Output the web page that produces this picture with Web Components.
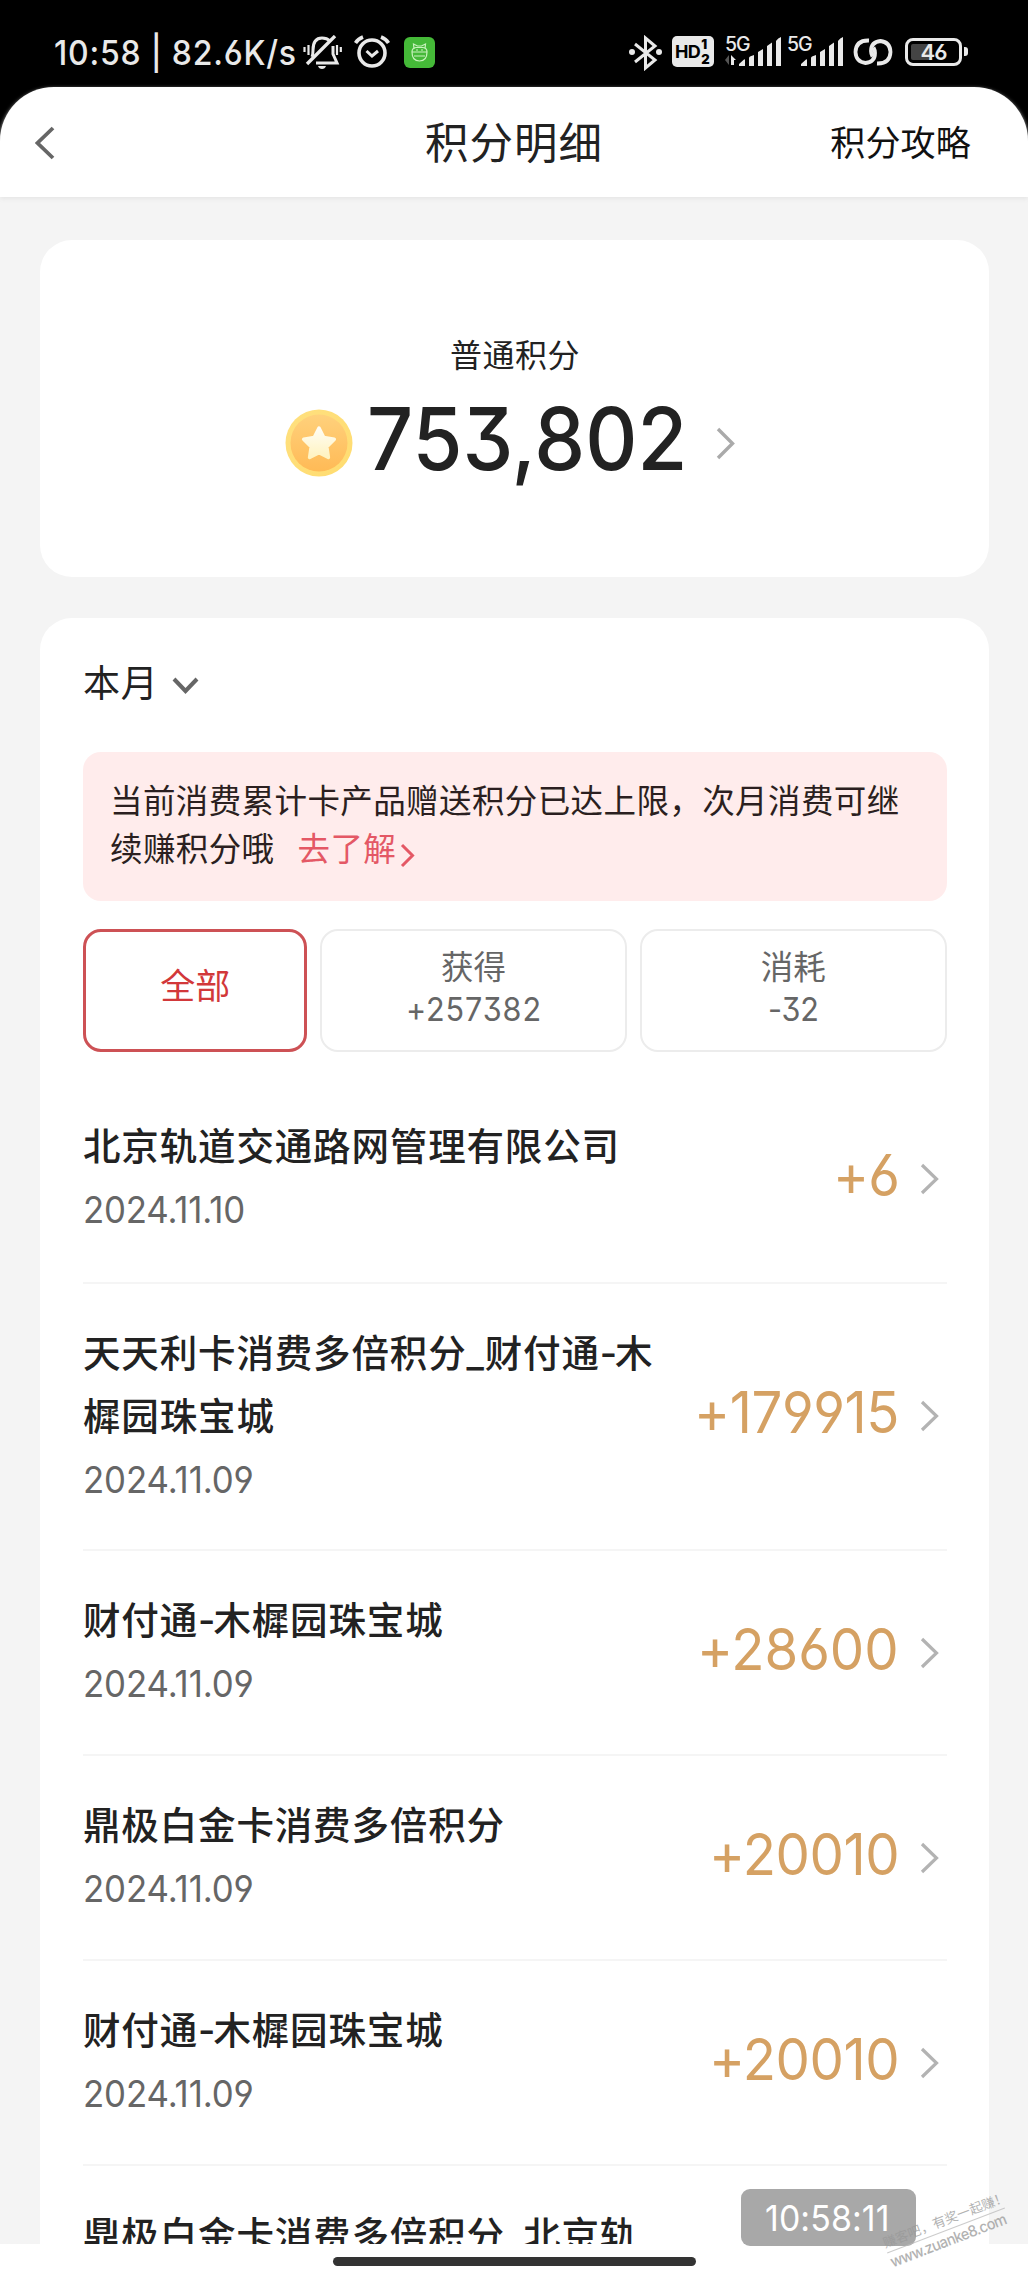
<!DOCTYPE html>
<html lang="zh-CN">
<head>
<meta charset="utf-8">
<title>积分明细</title>
<style>
  html, body { margin: 0; }
  body {
    width: 1028px; height: 2284px; overflow: hidden; background: #000;
    font-family: "Inter", "Noto Sans CJK SC", sans-serif; color: #222;
    font-feature-settings: "cv03", "cv04", "cv09"; font-optical-sizing: none;
  }
</style>
</head>
<body>
<points-app></points-app>

<script>
const define = (name, css, html) => customElements.define(name, class extends HTMLElement {
  constructor() {
    super();
    this.attachShadow({ mode: 'open' }).innerHTML =
      `<style>:host,*{box-sizing:border-box}svg{display:block;flex:none}${css}</style>${typeof html === 'function' ? html(this) : html}`;
  }
});

define('chevron-icon', `:host{display:block;flex:none}`, el => {
  const w = el.getAttribute('w'), h = el.getAttribute('h'), s = el.getAttribute('stroke') || 3.4;
  const pts = {
    right: `2,2 ${w - 2.5},${h / 2} 2,${h - 2}`,
    left: `${w - 2},2 2.5,${h / 2} ${w - 2},${h - 2}`,
    down: `2,2 ${w / 2},${h - 3} ${w - 2},2`
  }[el.getAttribute('dir') || 'right'];
  return `<svg width="${w}" height="${h}" fill="none" stroke="currentColor" stroke-width="${s}"><polyline points="${pts}"/></svg>`;
});

define('signal-bars', `
  :host{display:block;flex:none;width:57px;height:34px;position:relative}
  span{position:absolute;left:0;top:0;font-size:19.500px;line-height:18px;font-weight:500;letter-spacing:-1px}`,
  el => `<span>5G</span><svg width="57" height="34" fill="#e9e9e9">
    ${el.hasAttribute('data') ? '<path d="M0 25l4-5v10z" fill="#555"/><path d="M6 20l5 5H9v5H6z"/>' : ''}
    <path d="M14 31v-2l5-4.500q1-.5 1 .5v6zM24 31v-8q0-1 1-1.500l4-1.500v11zM33 31v-14l5-3v17zM42 31V11l5-3.500V31zM51 31V6q2-3 5-4V31z"/></svg>`);

define('status-bar', `
  :host{display:flex;height:87px;padding:35px 0 0 54px;align-items:flex-start;color:#e9e9e9}
  .time{font-size:34px;line-height:36px;font-weight:500;width:248px}
  .hd{width:42px;height:31px;margin:1px 0 0 10px;border-radius:5px;background:#e9e9e9;color:#000;display:flex;align-items:center;padding-left:3px;font-weight:700;font-size:18px;letter-spacing:-.6px}
  .hd i{font-style:normal;display:flex;flex-direction:column;font-size:13px;line-height:15px;margin-left:1px}
  .bat{width:57px;height:28px;margin:3px 0 0 12px;border:3px solid #e9e9e9;border-radius:8px;display:flex;align-items:center;justify-content:center;font-size:22px;letter-spacing:-1px;font-weight:600;background:linear-gradient(90deg,#444 45%,#000 45%) content-box;padding:3px;line-height:20px}
  .nub{width:4px;height:9px;background:#e9e9e9;border-radius:0 3px 3px 0;margin:12px 0 0 2px}
`, `
  <div class="time"><fit-text w="243">10:58 | 82.6K/s</fit-text></div>
  <svg width="41" height="36" viewBox="0 0 41 36" fill="none" stroke="#e9e9e9" stroke-width="3">
    <path d="M10 22Q11 20 11 15Q11 3 20 3Q25 3 28 6M31 11V19L35 28H14"/><path d="M33 1L5 29" stroke-width="3.300"/>
    <path d="M2.500 12v5M6.500 10v10M35 10v10M38.800 12v5" stroke-width="2.200"/><path d="M16 31h8q-1 3-4 3t-4-3z" fill="#e9e9e9" stroke="none"/></svg>
  <svg style="margin-left:11px" width="36" height="36" viewBox="0 0 36 36" fill="none" stroke="#e9e9e9" stroke-width="3.600">
    <circle cx="18" cy="18" r="13"/><path d="M1.500 8Q4 4 9 2M34.500 8Q32 4 27 2"/><path d="M12.500 16l5.500 5 6-5" stroke-width="3"/></svg>
  <svg style="margin:2px 0 0 14px" width="31" height="31" viewBox="0 0 31 31" fill="none" stroke="#c9f2bd" stroke-width="1.200">
    <rect width="31" height="31" rx="6" fill="#45b938" stroke="none"/>
    <path d="M10 12L9.500 7l4 2h4l4-2-.5 5M8 15q0-4 4-4.500h7q4 .5 4 4.500M8 15h15q0 9-7.500 9T8 15zM10 19h11M12 13h2M17 13h2"/></svg>
  <svg style="margin-left:194px" width="33" height="36" viewBox="0 0 33 36" fill="none" stroke="#e9e9e9" stroke-width="3">
    <path d="M6 9L26 25 16.500 33V3L26 11 6 27"/><circle cx="3" cy="17" r="3" fill="#e9e9e9" stroke="none"/><circle cx="30" cy="17" r="3" fill="#e9e9e9" stroke="none"/></svg>
  <div class="hd">HD<i><b>1</b><b>2</b></i></div>
  <signal-bars data style="margin-left:11px"></signal-bars>
  <signal-bars style="margin-left:5px"></signal-bars>
  <svg style="margin:3px 0 0 9px" width="40" height="28" viewBox="0 0 40 28" fill="none" stroke="#e9e9e9" stroke-width="3.800">
    <path d="M16 2.500Q3 2 2.500 14Q3 24 12.500 25Q22 24 22 15Q22 12 20.500 9.500"/><path d="M24 25.500Q37 26 37.500 14Q37 4 27.500 3Q18 4 18 13Q18 16 19.500 18.500"/></svg>
  <div class="bat">46</div><div class="nub"></div>
`);

define('nav-bar', `
  :host{display:grid;grid-template-columns:1fr auto 1fr;align-items:center;height:110px;background:#fff;padding:1px 57px 0 35px;border-radius:54px 54px 0 0;box-shadow:0 2px 4px #e6e6e6}
  h1{margin:0;font-size:43.500px;line-height:60px;font-weight:400;letter-spacing:1px;white-space:nowrap;transform:translateX(11px)}
  a{justify-self:end;font-size:35px;line-height:48px;letter-spacing:.2px;color:#111}
`, `<chevron-icon dir="left" w="20" h="34" stroke="3.800" style="color:#666"></chevron-icon><h1>积分明细</h1><a>积分攻略</a>`);

define('coin-icon', `:host{display:block;flex:none}`, `<svg width="68" height="68" viewBox="0 0 68 68">
  <defs><linearGradient id="r" x2="1" y2="1"><stop stop-color="#ffe07f"/><stop offset="1" stop-color="#ffdc70"/></linearGradient>
  <linearGradient id="c" x2="0" y2="1"><stop stop-color="#ffd17c"/><stop offset="1" stop-color="#ffba56"/></linearGradient>
  <linearGradient id="s" x2="0" y2="1"><stop stop-color="#fffdf4"/><stop offset="1" stop-color="#fff3c0"/></linearGradient></defs>
  <circle cx="34" cy="34" r="33.500" fill="url(#r)"/><circle cx="34" cy="34" r="28.500" fill="url(#c)"/>
  <path d="M34 19l4.800 9.500 10.500 1.700-7.500 7.600 1.600 10.600L34 43.600l-9.400 4.800 1.600-10.600-7.500-7.600 10.500-1.700z" fill="url(#s)" stroke="url(#s)" stroke-width="3.500" stroke-linejoin="round"/></svg>`);

define('balance-card', `
  :host{display:flex;flex:none;flex-direction:column;align-items:center;height:337px;background:#fff;border-radius:32px;padding-top:92px}
  .label{font-size:32px;line-height:48px;letter-spacing:.5px;margin-right:17px;transform:translateX(9px)}
  .row{display:flex;align-items:center;height:90px;margin-top:18px;width:460px}
  .num{font-size:86px;line-height:90px;font-weight:500;margin-left:14px;width:349px;margin-top:-8px}
`, `<div class="label">普通积分</div>
  <div class="row"><coin-icon></coin-icon><div class="num"><fit-text w="320"><slot></slot></fit-text></div>
  <chevron-icon w="19" h="33" style="color:#aaa"></chevron-icon></div>`);

define('month-picker', `:host{display:flex;align-items:center;gap:13px;height:54px;font-size:37px;letter-spacing:.8px}span{margin-top:-2px}`,
  `<span><slot></slot></span><chevron-icon dir="down" w="27" h="17" stroke="4" style="color:#666;margin-top:6px"></chevron-icon>`);

define('limit-notice', `
  :host{display:block;height:149px;background:#ffecec;border-radius:18px;padding:26px 27px;font-size:32.500px;line-height:48px;letter-spacing:.4px;color:#2b1f20;white-space:nowrap}
  .l2{display:flex;align-items:center;height:48px}
  a{color:#e45865;margin-left:23px}
`, `<div>当前消费累计卡产品赠送积分已达上限，次月消费可继</div>
  <div class="l2"><span>续赚积分哦</span><a>去了解</a><chevron-icon w="15" h="25" stroke="3" style="color:#e45865;margin:10px 0 0 4px"></chevron-icon></div>`);

define('filter-tab', `
  :host{display:flex;flex-direction:column;align-items:center;height:123px;border:2px solid #ececec;border-radius:18px;padding-top:16px;font-size:32.500px;line-height:42px;color:#666;width:308px}
  :host([active]){width:225px;border-color:#cd5155;border-width:3px;color:#d2383a;font-size:35px;padding-top:33px}
`, `<span><slot></slot></span><span><slot name="sum"></slot></span>`);

define('record-row', `
  :host{display:flex;justify-content:space-between;border-bottom:2px solid #f5f5f5;height:205px;padding-top:38px}
  :host([first]){height:207px}
  :host([lines="2"]){height:267px}
  .t{font-size:37.500px;line-height:63px;letter-spacing:.85px;font-weight:500;white-space:nowrap}
  .t span{letter-spacing:-2px}
  .d{font-size:37px;line-height:63px;color:#666}
  .a{display:flex;align-items:center;gap:21px;height:127px;padding-right:8px;color:#d5a163;font-size:58px;line-height:60px}
  :host([lines="2"]) .a{height:187px}
  .a fit-text{position:relative;top:-4px}
  chevron-icon{color:#b3b3b3}
`, el => `<div><div class="t">${el.getAttribute('name').replace('|', '<br>').replace('-', '<span>-</span>')}</div><div class="d"><fit-text w="${el.getAttribute('dw') || 171}">${el.getAttribute('date')}</fit-text></div></div>
  <div class="a">${el.getAttribute('amount') ? `<fit-text w="${el.getAttribute('aw')}">${el.getAttribute('amount')}</fit-text><chevron-icon w="19" h="32" stroke="3.200"></chevron-icon>` : ''}</div>`);

define('points-app', `
  :host{display:flex;flex-direction:column;height:2284px;position:relative}
  main{height:2047px;background:#f4f4f4;padding:43px 39px 0 40px;overflow:hidden;display:flex;flex-direction:column;gap:41px}
  nav-bar{position:relative}
  section{flex:none;background:#fff;border-radius:32px;padding:37px 42px 0 43px}
  limit-notice{margin-top:43px}
  .tabs{display:flex;gap:12.500px;margin:28px 0 25px}
  footer{height:40px;background:#fff;display:flex;justify-content:center;padding-top:13px}
  .home{width:363px;height:9px;border-radius:5px;background:#333}
  .clock{position:absolute;left:741px;top:2189px;width:175px;height:57px;border-radius:9px;background:#a8a8a8;color:#fff;font-size:36px;line-height:58px;padding-left:24px}
  .mark{position:absolute;left:883px;top:2211px;width:126px;transform:rotate(-21deg);color:#999;opacity:.75;font-size:13.200px;line-height:19px;white-space:nowrap}
  .mark div:first-child{border-bottom:1px solid #bbb}
  .mark div:last-child{font-size:15.500px;font-weight:500}
`, `
  <status-bar></status-bar>
  <div style="background:linear-gradient(#000 60px,#f4f4f4 60px)"><nav-bar></nav-bar></div>
  <main>
    <balance-card>753,802</balance-card>
    <section>
      <month-picker>本月</month-picker>
      <limit-notice></limit-notice>
      <div class="tabs">
        <filter-tab active>全部</filter-tab>
        <filter-tab>获得<fit-text slot="sum" w="136">+257382</fit-text></filter-tab>
        <filter-tab>消耗<fit-text slot="sum" w="51">-32</fit-text></filter-tab>
      </div>
      <record-row first name="北京轨道交通路网管理有限公司" date="2024.11.10" dw="162" amount="+6" aw="66"></record-row>
      <record-row lines="2" name="天天利卡消费多倍积分_财付通-木|樨园珠宝城" date="2024.11.09" amount="+179915" aw="205"></record-row>
      <record-row name="财付通-木樨园珠宝城" date="2024.11.09" amount="+28600" aw="202"></record-row>
      <record-row name="鼎极白金卡消费多倍积分" date="2024.11.09" amount="+20010" aw="190"></record-row>
      <record-row name="财付通-木樨园珠宝城" date="2024.11.09" amount="+20010" aw="190"></record-row>
      <record-row name="鼎极白金卡消费多倍积分_北京轨" date=""></record-row>
    </section>
  </main>
  <footer><div class="home"></div></footer>
  <div class="clock"><fit-text w="125">10:58:11</fit-text></div>
  <div class="mark"><div>赚客吧，有奖一起赚！</div><div><fit-text w="123">www.zuanke8.com</fit-text></div></div>
`);

/* Sets its text slightly condensed and spreads it over a given advance width. */
customElements.define('fit-text', class extends HTMLElement {
  constructor() {
    super();
    this.attachShadow({ mode: 'open' }).innerHTML =
      '<style>:host{display:inline-block;white-space:nowrap;flex:none}span{display:inline-block;transform-origin:0 50%}</style><span><slot></slot></span>';
  }
  connectedCallback() {
    const span = this.shadowRoot.querySelector('span');
    const nodes = span.firstChild.assignedNodes({ flatten: true });
    const text = nodes.map(n => n.textContent).join('').trim();
    if (!text) return;
    const k = 0.94, w = +this.getAttribute('w');
    span.style.letterSpacing = '0px';
    span.style.letterSpacing = (w / k - span.offsetWidth) / text.length + 'px';
    span.style.transform = `scaleX(${k})`;
    this.style.width = w + 'px';
  }
});
</script>
</body>
</html>
